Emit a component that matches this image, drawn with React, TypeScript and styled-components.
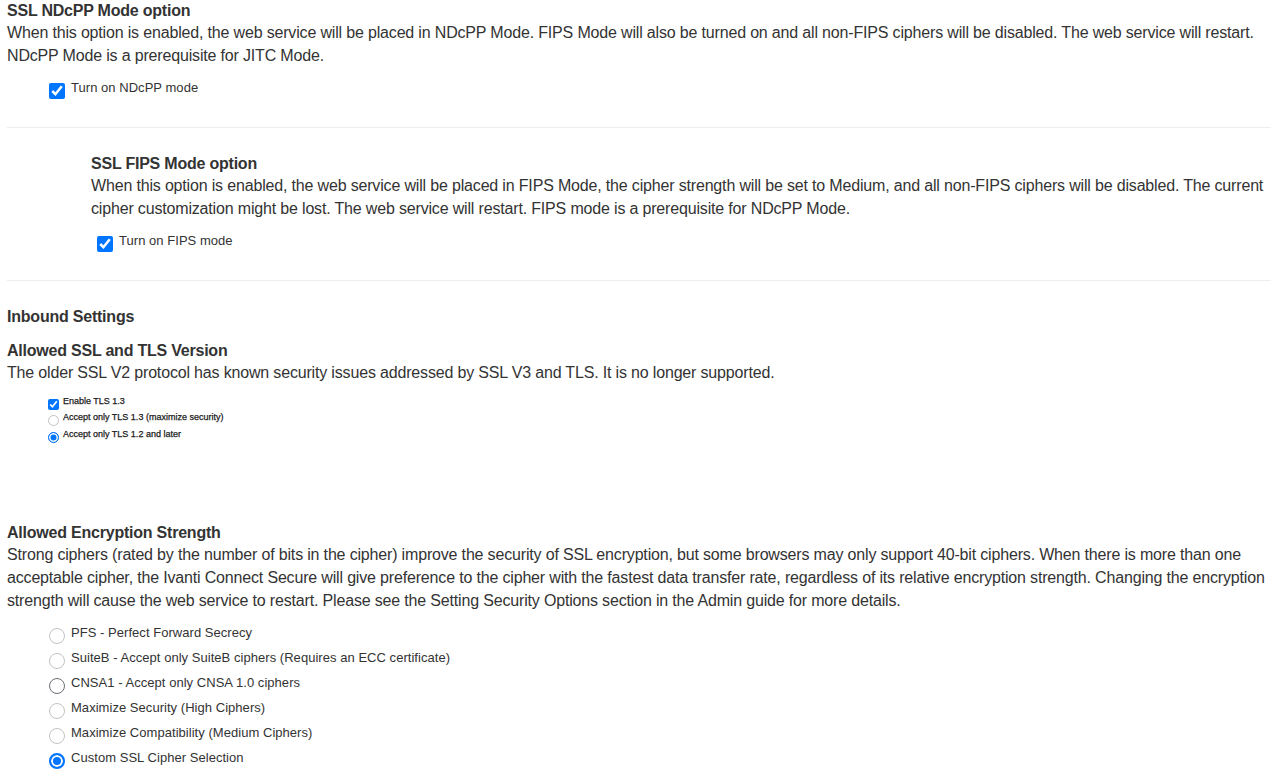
import React from 'react';
import styled, { createGlobalStyle, css } from 'styled-components';

const GlobalStyle = createGlobalStyle`
    html, body {
        margin: 0;
        padding: 0;
        background: #fff;
    }
    body {
        font-family: "Liberation Sans", Arial, sans-serif;
        color: #333;
    }
`;

const Page = styled.div`
    display: flex;
    flex-direction: column;
    padding: 0 0 40px 7px;
`;

const Section = styled.section<{ $indent?: number; $gap?: number }>`
    display: flex;
    flex-direction: column;
    padding-left: ${p => p.$indent || 0}px;
    margin-top: ${p => p.$gap || 0}px;
`;

const Title = styled.h4<{ $gap?: number }>`
    margin: ${p => p.$gap || 0}px 0 0;
    font-size: 16px;
    font-weight: bold;
    line-height: 21px;
    letter-spacing: -0.22px;
    color: #333;
`;

const Text = styled.p`
    margin: 0;
    font-size: 16px;
    line-height: 23px;
    letter-spacing: -0.17px;
`;

const Divider = styled.hr`
    border: 0;
    border-top: 1px solid #eee;
    margin: 28px 0 25px;
    height: 0;
`;

const Options = styled.div<{ $indent: number; $gap: number; $step: number }>`
    display: flex;
    flex-direction: column;
    padding-left: ${p => p.$indent}px;
    margin-top: ${p => p.$gap}px;
    gap: ${p => p.$step}px;
`;

const Row = styled.label<{ $small?: boolean }>`
    display: flex;
    align-items: flex-start;
    gap: ${p => (p.$small ? 4 : 6)}px;
    font-size: ${p => (p.$small ? 9 : 13)}px;
    color: ${p => (p.$small ? '#1a1a1a' : '#333')};
    cursor: pointer;
`;

const Caption = styled.span<{ $small?: boolean }>`
    line-height: ${p => (p.$small ? 11 : 13)}px;
    margin-top: ${p => (p.$small ? -3 : -2)}px;
    white-space: nowrap;
    ${p => (p.$small ? css`-webkit-text-stroke: 0.25px #1a1a1a;` : css`letter-spacing: 0.04px;`)}
`;

const Check = styled.input<{ $small?: boolean }>`
    margin: 0;
    flex: none;
    width: ${p => (p.$small ? 11 : 16)}px;
    height: ${p => (p.$small ? 11 : 16)}px;
    accent-color: #0075ff;
`;

const Radio = styled.input<{ $small?: boolean }>`
    appearance: none;
    -webkit-appearance: none;
    margin: 0;
    flex: none;
    box-sizing: border-box;
    width: ${p => (p.$small ? 11 : 16)}px;
    height: ${p => (p.$small ? 11 : 16)}px;
    border-radius: 50%;
    border: ${p => (p.$small ? 1 : 1.5)}px solid #6e6e78;
    background: #fff;

    &:disabled {
        border-color: #c3c3c3;
    }

    &:checked {
        border: ${p => (p.$small ? 1.5 : 2)}px solid #0075ff;
        background: #0075ff;
        box-shadow: inset 0 0 0 ${p => (p.$small ? 1.5 : 2)}px #fff;
    }
`;

type Opt = { label: string; type: 'checkbox' | 'radio'; checked?: boolean; disabled?: boolean };

const tlsOptions: Opt[] = [
    { label: 'Enable TLS 1.3', type: 'checkbox', checked: true },
    { label: 'Accept only TLS 1.3 (maximize security)', type: 'radio', disabled: true },
    { label: 'Accept only TLS 1.2 and later', type: 'radio', checked: true },
];

const cipherOptions: Opt[] = [
    { label: 'PFS - Perfect Forward Secrecy', type: 'radio', disabled: true },
    { label: 'SuiteB - Accept only SuiteB ciphers (Requires an ECC certificate)', type: 'radio', disabled: true },
    { label: 'CNSA1 - Accept only CNSA 1.0 ciphers', type: 'radio' },
    { label: 'Maximize Security (High Ciphers)', type: 'radio', disabled: true },
    { label: 'Maximize Compatibility (Medium Ciphers)', type: 'radio', disabled: true },
    { label: 'Custom SSL Cipher Selection', type: 'radio', checked: true },
];

const OptionList: React.FC<{ items: Opt[]; name: string; small?: boolean }> = ({ items, name, small }) => (
    <>
        {items.map((o, i) => {
            const Input = o.type === 'radio' ? Radio : Check;
            return (
                <Row key={i} $small={small}>
                    <Input
                        $small={small}
                        type={o.type}
                        name={o.type === 'radio' ? name : undefined}
                        defaultChecked={o.checked}
                        disabled={o.disabled}
                    />
                    <Caption $small={small}>{o.label}</Caption>
                </Row>
            );
        })}
    </>
);

export default function App() {
    return (
        <Page>
            <GlobalStyle />
            <Section>
                <Title>SSL NDcPP Mode option</Title>
                <Text>
                    When this option is enabled, the web service will be placed in NDcPP Mode. FIPS Mode will also be turned on and all non-FIPS ciphers will be disabled. The web service will restart. NDcPP Mode is a prerequisite for JITC Mode.
                </Text>
                <Options $indent={42} $gap={16} $step={0}>
                    <OptionList name="ndcpp" items={[{ label: 'Turn on NDcPP mode', type: 'checkbox', checked: true }]} />
                </Options>
            </Section>

            <Divider />

            <Section $indent={84}>
                <Title>SSL FIPS Mode option</Title>
                <Text>
                    When this option is enabled, the web service will be placed in FIPS Mode, the cipher strength will be set to Medium, and all non-FIPS ciphers will be disabled. The current cipher customization might be lost. The web service will restart. FIPS mode is a prerequisite for NDcPP Mode.
                </Text>
                <Options $indent={6} $gap={16} $step={0}>
                    <OptionList name="fips" items={[{ label: 'Turn on FIPS mode', type: 'checkbox', checked: true }]} />
                </Options>
            </Section>

            <Divider />

            <Section>
                <Title>Inbound Settings</Title>
                <Title $gap={13}>Allowed SSL and TLS Version</Title>
                <Text>The older SSL V2 protocol has known security issues addressed by SSL V3 and TLS. It is no longer supported.</Text>
                <Options $indent={41} $gap={15} $step={5.3}>
                    <OptionList name="tls" small items={tlsOptions} />
                </Options>
            </Section>

            <Section $gap={79}>
                <Title>Allowed Encryption Strength</Title>
                <Text>
                    Strong ciphers (rated by the number of bits in the cipher) improve the security of SSL encryption, but some browsers may only support 40-bit ciphers. When there is more than one acceptable cipher, the Ivanti Connect Secure will give preference to the cipher with the fastest data transfer rate, regardless of its relative encryption strength. Changing the encryption strength will cause the web service to restart. Please see the Setting Security Options section in the Admin guide for more details.
                </Text>
                <Options $indent={42} $gap={16} $step={9}>
                    <OptionList name="cipher" items={cipherOptions} />
                </Options>
            </Section>
        </Page>
    );
}
